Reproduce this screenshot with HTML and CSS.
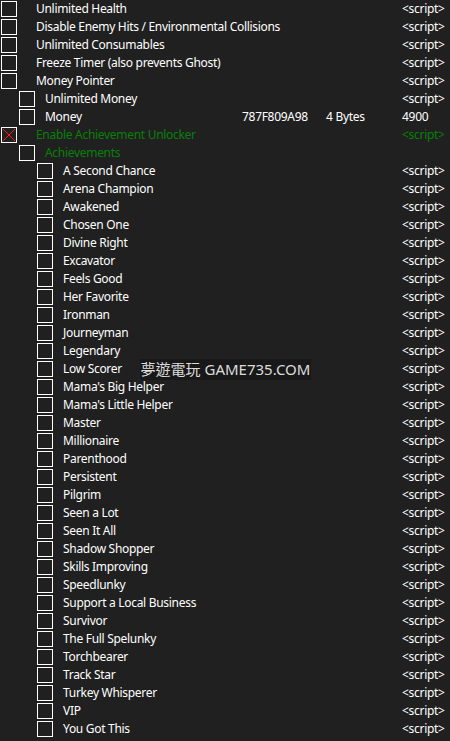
FILE: index.html
```html
<!DOCTYPE html>
<html>
<head>
<meta charset="utf-8">
<link rel="stylesheet" href="styles.css">
</head>
<body>
<div class="table">
  <div class="row l0"><span class="cb"></span><span class="name">Unlimited Health</span><span class="addr"></span><span class="type"></span><span class="val">&lt;script&gt;</span></div>
  <div class="row l0"><span class="cb"></span><span class="name">Disable Enemy Hits / Environmental Collisions</span><span class="addr"></span><span class="type"></span><span class="val">&lt;script&gt;</span></div>
  <div class="row l0"><span class="cb"></span><span class="name">Unlimited Consumables</span><span class="addr"></span><span class="type"></span><span class="val">&lt;script&gt;</span></div>
  <div class="row l0"><span class="cb"></span><span class="name">Freeze Timer (also prevents Ghost)</span><span class="addr"></span><span class="type"></span><span class="val">&lt;script&gt;</span></div>
  <div class="row l0"><span class="cb"></span><span class="name">Money Pointer</span><span class="addr"></span><span class="type"></span><span class="val">&lt;script&gt;</span></div>
  <div class="row l1"><span class="cb"></span><span class="name">Unlimited Money</span><span class="addr"></span><span class="type"></span><span class="val">&lt;script&gt;</span></div>
  <div class="row l1"><span class="cb"></span><span class="name">Money</span><span class="addr">787F809A98</span><span class="type">4 Bytes</span><span class="val">4900</span></div>
  <div class="row l0 green"><span class="cb on"><svg viewBox="0 0 14 14" width="14" height="14"><path d="M1 1L13 13M13 1L1 13" stroke="#ff1a1a" stroke-width="1"/></svg></span><span class="name">Enable Achievement Unlocker</span><span class="addr"></span><span class="type"></span><span class="val">&lt;script&gt;</span></div>
  <div class="row l1 green"><span class="cb"></span><span class="name">Achievements</span><span class="addr"></span><span class="type"></span><span class="val"></span></div>
  <div class="row l2"><span class="cb"></span><span class="name">A Second Chance</span><span class="addr"></span><span class="type"></span><span class="val">&lt;script&gt;</span></div>
  <div class="row l2"><span class="cb"></span><span class="name">Arena Champion</span><span class="addr"></span><span class="type"></span><span class="val">&lt;script&gt;</span></div>
  <div class="row l2"><span class="cb"></span><span class="name">Awakened</span><span class="addr"></span><span class="type"></span><span class="val">&lt;script&gt;</span></div>
  <div class="row l2"><span class="cb"></span><span class="name">Chosen One</span><span class="addr"></span><span class="type"></span><span class="val">&lt;script&gt;</span></div>
  <div class="row l2"><span class="cb"></span><span class="name">Divine Right</span><span class="addr"></span><span class="type"></span><span class="val">&lt;script&gt;</span></div>
  <div class="row l2"><span class="cb"></span><span class="name">Excavator</span><span class="addr"></span><span class="type"></span><span class="val">&lt;script&gt;</span></div>
  <div class="row l2"><span class="cb"></span><span class="name">Feels Good</span><span class="addr"></span><span class="type"></span><span class="val">&lt;script&gt;</span></div>
  <div class="row l2"><span class="cb"></span><span class="name">Her Favorite</span><span class="addr"></span><span class="type"></span><span class="val">&lt;script&gt;</span></div>
  <div class="row l2"><span class="cb"></span><span class="name">Ironman</span><span class="addr"></span><span class="type"></span><span class="val">&lt;script&gt;</span></div>
  <div class="row l2"><span class="cb"></span><span class="name">Journeyman</span><span class="addr"></span><span class="type"></span><span class="val">&lt;script&gt;</span></div>
  <div class="row l2"><span class="cb"></span><span class="name">Legendary</span><span class="addr"></span><span class="type"></span><span class="val">&lt;script&gt;</span></div>
  <div class="row l2"><span class="cb"></span><span class="name">Low Scorer</span><span class="addr"></span><span class="type"></span><span class="val">&lt;script&gt;</span></div>
  <div class="row l2"><span class="cb"></span><span class="name">Mama's Big Helper</span><span class="addr"></span><span class="type"></span><span class="val">&lt;script&gt;</span></div>
  <div class="row l2"><span class="cb"></span><span class="name">Mama's Little Helper</span><span class="addr"></span><span class="type"></span><span class="val">&lt;script&gt;</span></div>
  <div class="row l2"><span class="cb"></span><span class="name">Master</span><span class="addr"></span><span class="type"></span><span class="val">&lt;script&gt;</span></div>
  <div class="row l2"><span class="cb"></span><span class="name">Millionaire</span><span class="addr"></span><span class="type"></span><span class="val">&lt;script&gt;</span></div>
  <div class="row l2"><span class="cb"></span><span class="name">Parenthood</span><span class="addr"></span><span class="type"></span><span class="val">&lt;script&gt;</span></div>
  <div class="row l2"><span class="cb"></span><span class="name">Persistent</span><span class="addr"></span><span class="type"></span><span class="val">&lt;script&gt;</span></div>
  <div class="row l2"><span class="cb"></span><span class="name">Pilgrim</span><span class="addr"></span><span class="type"></span><span class="val">&lt;script&gt;</span></div>
  <div class="row l2"><span class="cb"></span><span class="name">Seen a Lot</span><span class="addr"></span><span class="type"></span><span class="val">&lt;script&gt;</span></div>
  <div class="row l2"><span class="cb"></span><span class="name">Seen It All</span><span class="addr"></span><span class="type"></span><span class="val">&lt;script&gt;</span></div>
  <div class="row l2"><span class="cb"></span><span class="name">Shadow Shopper</span><span class="addr"></span><span class="type"></span><span class="val">&lt;script&gt;</span></div>
  <div class="row l2"><span class="cb"></span><span class="name">Skills Improving</span><span class="addr"></span><span class="type"></span><span class="val">&lt;script&gt;</span></div>
  <div class="row l2"><span class="cb"></span><span class="name">Speedlunky</span><span class="addr"></span><span class="type"></span><span class="val">&lt;script&gt;</span></div>
  <div class="row l2"><span class="cb"></span><span class="name">Support a Local Business</span><span class="addr"></span><span class="type"></span><span class="val">&lt;script&gt;</span></div>
  <div class="row l2"><span class="cb"></span><span class="name">Survivor</span><span class="addr"></span><span class="type"></span><span class="val">&lt;script&gt;</span></div>
  <div class="row l2"><span class="cb"></span><span class="name">The Full Spelunky</span><span class="addr"></span><span class="type"></span><span class="val">&lt;script&gt;</span></div>
  <div class="row l2"><span class="cb"></span><span class="name">Torchbearer</span><span class="addr"></span><span class="type"></span><span class="val">&lt;script&gt;</span></div>
  <div class="row l2"><span class="cb"></span><span class="name">Track Star</span><span class="addr"></span><span class="type"></span><span class="val">&lt;script&gt;</span></div>
  <div class="row l2"><span class="cb"></span><span class="name">Turkey Whisperer</span><span class="addr"></span><span class="type"></span><span class="val">&lt;script&gt;</span></div>
  <div class="row l2"><span class="cb"></span><span class="name">VIP</span><span class="addr"></span><span class="type"></span><span class="val">&lt;script&gt;</span></div>
  <div class="row l2"><span class="cb"></span><span class="name">You Got This</span><span class="addr"></span><span class="type"></span><span class="val">&lt;script&gt;</span></div>
  <div class="watermark">夢遊電玩 GAME735.COM</div>
</div>
</body>
</html>
```
FILE: styles.css
```css
html, body {
  margin: 0;
  padding: 0;
  background: #202020;
}
body {
  width: 450px;
  height: 741px;
  overflow: hidden;
  font-family: "Noto Sans", "Open Sans", sans-serif;
  font-size: 12px;
  letter-spacing: -0.3px;
  color: #ffffff;
}
.table {
  position: relative;
}
.row {
  display: flex;
  align-items: center;
  height: 18px;
  white-space: nowrap;
}
.row > span:not(.cb) {
  padding-bottom: 2px;
}
.cb {
  box-sizing: border-box;
  width: 16px;
  height: 16px;
  border: 1px solid #ffffff;
  flex: none;
  display: flex;
  align-items: center;
  justify-content: center;
}
.l0 .cb { margin-left: 1px; margin-right: 19px; }
.l1 .cb { margin-left: 19px; margin-right: 10px; }
.l2 .cb { margin-left: 37px; margin-right: 10px; }
.name {
  flex: none;
}
.l0 .name { width: 206px; }
.l1 .name { width: 197px; }
.l2 .name { width: 179px; }
.addr { width: 84px; flex: none; }
.type { width: 76px; flex: none; }
.val { flex: none; }
.green { color: #078007; }
.watermark {
  position: absolute;
  left: 140px;
  top: 359px;
  width: 171px;
  height: 21px;
  background: #181818;
  color: #dcdcdc;
  font-size: 15px;
  letter-spacing: 0;
  line-height: 21px;
  text-align: center;
  font-family: "Noto Sans", "Noto Sans CJK TC", sans-serif;
}
```
